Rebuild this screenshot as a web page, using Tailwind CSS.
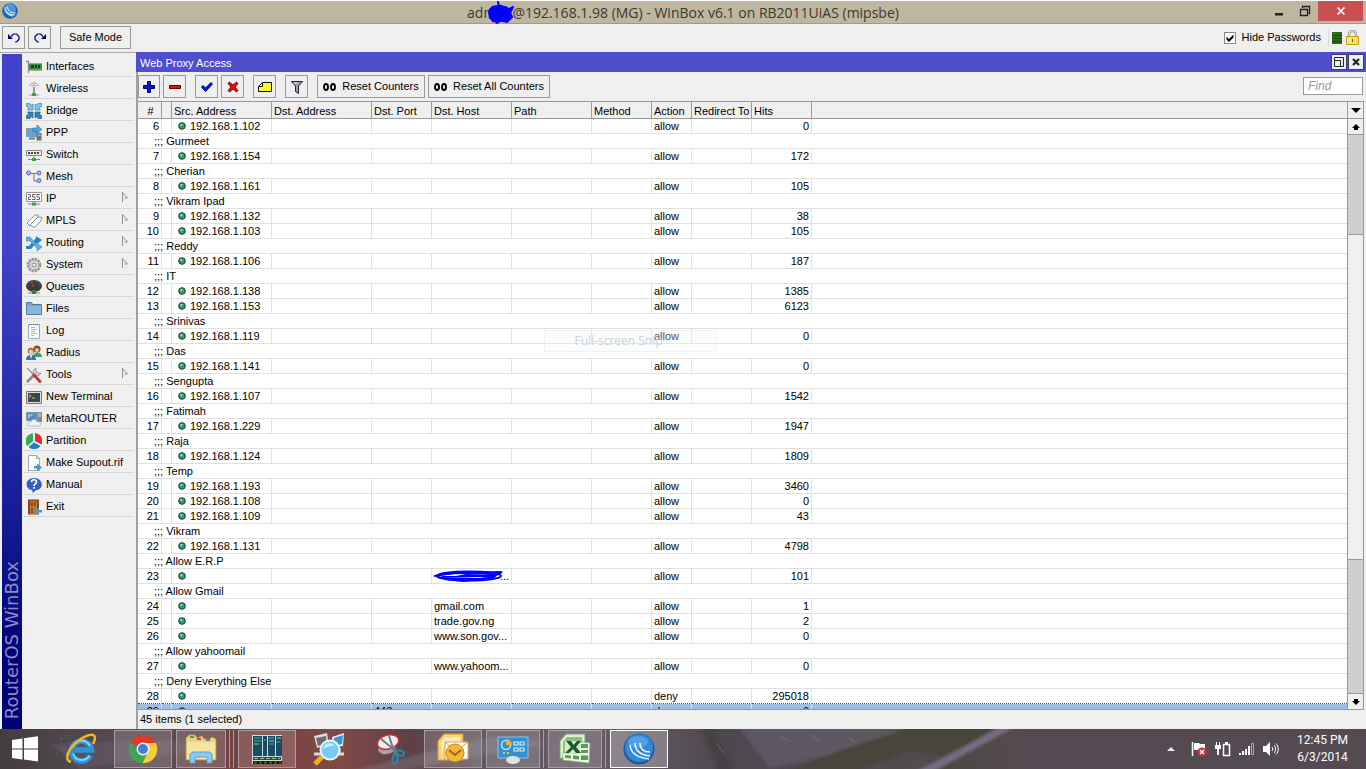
<!DOCTYPE html>
<html lang="en">
<head>
  <meta charset="UTF-8">
  <meta name="viewport" content="width=device-width, initial-scale=1.0">
  <title>WinBox - Web Proxy Access</title>
  <script src="https://cdn.jsdelivr.net/npm/@tailwindcss/browser@4"></script>
</head>
<body class="h-screen flex flex-col overflow-hidden bg-[#efefef] text-black text-[11px] font-['Liberation_Sans',Arial,sans-serif]">

  <!-- title bar -->
  <header class="h-6 shrink-0 grid grid-cols-[1fr_auto_1fr] bg-[#bfb6a0] border-t border-t-white border-b border-b-[#a29a86]">
    <div class="pl-0.5 pt-0.5">
      <svg class="w-4 h-4" viewBox="0 0 16 16">
        <circle cx="8" cy="8" r="7.8" fill="#1c62b4"/>
        <circle cx="8" cy="6.500" r="6" fill="#4b93dc"/>
        <path d="M3 4c0 5 4 8 10 8M5.500 3.500c0 4 3 6.500 8 6.500M4 8c1 3 4 5 7 5" fill="none" stroke="#e8f4ff" stroke-width="1"/>
      </svg>
    </div>
    <h1 class="relative text-sm leading-6 whitespace-nowrap text-[#3c382f] font-['Open_Sans',sans-serif]">
      adm<span class="inline-block w-4"></span>@192.168.1.98 (MG) - WinBox v6.1 on RB2011UiAS (mipsbe)
      <svg class="absolute left-5 top-0 w-7 h-6" viewBox="0 0 28 24" fill="none" stroke="#0000fe" stroke-linecap="round" stroke-linejoin="round">
        <path d="M3 9 6 6l7-1 7 2 3 5-1 5-5 3-6-1-5 1-2-5z" fill="#0000fe" stroke-width="2.500"/>
        <path d="M12 5 11 1M20 9l6-3-3 6 2 4-4 4M2 11l1 6 5 3M8 20l2 2 3-2M17 20l3 1" stroke-width="2"/>
      </svg>
    </h1>
    <div class="flex justify-end pr-[3px]">
      <button class="w-[26px] grid place-items-center" aria-label="Minimize"><svg class="w-2.5 h-5" viewBox="0 0 10 20"><path d="M1 10h8v2.500H1z" fill="#222"/></svg></button>
      <button class="w-[26px] grid place-items-center" aria-label="Restore"><svg class="w-3 h-5" viewBox="0 0 12 20" fill="none" stroke="#222"><path d="M1.500 6.500h7v6h-7zM1 6.500h8M3.500 5V3.500h7v7H9.500" stroke-width="1.300"/></svg></button>
      <button class="w-[45px] h-5 grid place-items-center bg-[#c94f50]" aria-label="Close"><svg class="w-2.5 h-2.5" viewBox="0 0 10 10"><path d="M1.500 1.500l7 7m0-7l-7 7" stroke="#fff" stroke-width="1.600"/></svg></button>
    </div>
  </header>

  <!-- session toolbar -->
  <div class="h-7 shrink-0 flex items-start pt-0.5 pl-0.5">
    <button class="w-[23px] h-[23px] grid place-items-center border border-[#999]" aria-label="Undo">
      <svg class="w-3 h-3" viewBox="0 0 12 12" fill="none" stroke="#000080" stroke-width="1.200"><path d="M3 4.500 5.500 2h3L11 4.500v3L8.500 10H7"/><path d="M0 2v5h5z" fill="#000080" stroke="none"/></svg>
    </button>
    <button class="ml-[3px] w-[23px] h-[23px] grid place-items-center border border-[#999]" aria-label="Redo">
      <svg class="w-3 h-3" viewBox="0 0 12 12" fill="none" stroke="#000080" stroke-width="1.200"><path d="M9 4.500 6.500 2h-3L1 4.500v3L3.500 10H5"/><path d="M12 2v5H7z" fill="#000080" stroke="none"/></svg>
    </button>
    <button class="ml-[9px] w-[71px] h-[23px] border border-[#999]">Safe Mode</button>
    <div class="ml-auto h-[23px] flex items-center pr-[7px]">
      <label class="flex items-center gap-1.5">
        <span class="relative w-3 h-3">
          <input type="checkbox" checked class="peer appearance-none block w-3 h-3 bg-white border border-[#888]">
          <svg class="absolute inset-0 hidden peer-checked:block w-3 h-3 pointer-events-none" viewBox="0 0 12 12"><path d="M2.500 4.500l2.500 2.500 4.500-4.500v3L5 10 2.500 7.500z" fill="#000"/></svg>
        </span>
        Hide Passwords
      </label>
      <span class="ml-[7px] w-px h-4 bg-[#dadada]"></span>
      <svg class="ml-[3px] w-2.5 h-3" viewBox="0 0 10 12"><path d="M0 0h10v12H0z" fill="#2c6a16"/><path d="M0 3.500h10M0 6.500h10M0 9.500h10" stroke="#1c4d0c"/></svg>
      <svg class="ml-1 w-[13px] h-[15px]" viewBox="0 0 13 15"><path d="M3 8V4.500a3.500 3.500 0 0 1 7 0V8" fill="none" stroke="#8f8f8f" stroke-width="2.400"/><path d="M3 8V4.500a3.500 3.500 0 0 1 7 0V8" fill="none" stroke="#eee"/><path d="M.5 6.500h12v8H.5z" fill="#f5dc5c" stroke="#c79d1c"/><path d="M2 8v5M4 8v5M9.500 8v5" stroke="#fff3a8"/><path d="M6.500 9v3" stroke="#7d6410"/></svg>
    </div>
  </div>

  <div class="flex-1 min-h-0 flex">
    <!-- side menu -->
    <aside class="w-[136px] shrink-0 flex border-t border-[#aaa] pl-0.5 pt-px">
      <div class="w-5 flex items-end justify-center pb-2.5 bg-gradient-to-b from-[#4040c8] from-30% to-[#000078] to-90%">
        <span class="[writing-mode:vertical-rl] rotate-180 leading-5 text-lg/5 whitespace-nowrap text-[#8c8cc0] font-['DejaVu_Sans',sans-serif]">RouterOS WinBox</span>
      </div>
      <nav class="flex-1 pt-px pl-0.5 pr-0.5 [&>button]:w-full [&>button]:h-[22px] [&>button]:flex [&>button]:items-center [&>button]:gap-1 [&>button]:pl-0.5 [&>button]:pt-0.5 [&>button]:border-b [&>button]:border-[#d6d6d6] [&>button]:whitespace-nowrap [&>button>svg]:w-4 [&>button>svg]:h-4 [&>button>svg]:shrink-0">
        <button><svg viewBox="0 0 16 16"><path d="M0 2.500h2.500V14" fill="none" stroke="#888" stroke-width="1.300"/><path d="M3 4h13v7.500H3z" fill="#3c8c46"/><path d="M3 4h13v1H3z" fill="#7fc07f"/><path d="M5 6h3v3H5zM9 6h2v3H9zM12 6h2v3h-2z" fill="#153d1b"/><path d="M4 11h11" stroke="#b8c665" stroke-dasharray="1 1"/></svg>Interfaces</button>
        <button><svg viewBox="0 0 16 16" fill="none"><path d="M3.500 5C5 1 11 1 12.500 5M5.500 6C6.500 3.500 9.500 3.500 10.500 6" stroke="#999"/><path d="M8 6v7" stroke="#777" stroke-width="1.500"/><path d="M3 14h10" stroke="#999"/><path d="M6 12h4v3H6z" fill="#3ca34c"/></svg>Wireless</button>
        <button><svg viewBox="0 0 16 16" stroke-width=".7"><g fill="#7cc4ee" stroke="#3a86b5"><path d="M.5.5H4l1 2 2-1.500V7H1.500L3 5 .5 3.500z"/><path d="M15.500.5H12l-1 2L9 1v6h5.500L13 5l2.500-1.500z"/></g><g fill="#3583b3" stroke="#1f5f8a"><path d="M.5 15.500H4l1-2L7 15V9H1.500L3 11 .5 12.500z"/><path d="M15.500 15.500H12l-1-2L9 15V9h5.500L13 11l2.500 1.500z"/></g></svg>Bridge</button>
        <button><svg viewBox="0 0 16 16"><path d="M.5 3.500h10v8H.5z" fill="#5ba7df" stroke="#8a99a5"/><path d="M3 13.500h6" stroke="#777" stroke-width="2"/><path d="M10.500 8h5v7.500h-5z" fill="#66757d"/><path d="M11.500 10h3" stroke="#ccd"/><path d="M7 7V3h4V0l5 4.500-5 4V6H9v1z" fill="#4da5e6" stroke="#246eac" stroke-width=".6"/></svg>PPP</button>
        <button><svg viewBox="0 0 16 16"><path d="M.5 3.500h15v5H.5z" fill="#eee" stroke="#888"/><path d="M2 6h12" stroke="#444" stroke-width="2" stroke-dasharray="2 1"/><path d="M8 9v4M2 12.500h12" stroke="#888"/><path d="M6 11h4v3H6z" fill="#3c9a49"/></svg>Switch</button>
        <button><svg viewBox="0 0 16 16"><path d="M5 4.500h6M8 5v7h3" fill="none" stroke="#777"/><g fill="#a9b5f4" stroke="#5968c4"><circle cx="2.500" cy="4" r="2"/><circle cx="13" cy="4" r="2"/><circle cx="13" cy="11.500" r="2"/></g></svg>Mesh</button>
        <button><svg viewBox="0 0 16 16"><path d="M.5 1.500h15v9H.5z" fill="#fff" stroke="#999"/><path d="M2 3.500h2.500V6H2.500v2.500H5M9.500 3.500h-3V6h2.500v2.500h-3M14 3.500h-3V6h2.500v2.500h-3" fill="none" stroke="#555" stroke-width=".9"/><path d="M2 13h12" stroke="#888"/><path d="M6 11.500h4v3H6z" fill="#3c9a49"/></svg>IP<svg class="ml-auto mr-[3px]" viewBox="0 0 16 16"><path d="M7.500 1v10M7.500 1.500l5 5.500H9.500" fill="none" stroke="#888" stroke-width=".9"/></svg></button>
        <button><svg viewBox="0 0 16 16" fill="#fff" stroke="#7f9490"><path d="M1 10 9 2l3 0v3l-8 8z"/><path d="M4 12l8-8 3.500.5-.5 3.500-7 6.500z"/></svg>MPLS<svg class="ml-auto mr-[3px]" viewBox="0 0 16 16"><path d="M7.500 1v10M7.500 1.500l5 5.500H9.500" fill="none" stroke="#888" stroke-width=".9"/></svg></button>
        <button><svg viewBox="0 0 16 16"><path d="M0 11h3l7-8V1l6 4-5 4V7l-6 7H0z" fill="#2f82c4"/><path d="M0 2h4l6 7V7l6 5-5 4v-3L4 6H0z" fill="#59b1ea" stroke="#2e78b3" stroke-width=".5"/></svg>Routing<svg class="ml-auto mr-[3px]" viewBox="0 0 16 16"><path d="M7.500 1v10M7.500 1.500l5 5.500H9.500" fill="none" stroke="#888" stroke-width=".9"/></svg></button>
        <button><svg viewBox="0 0 16 16" fill="none"><circle cx="8" cy="8" r="6.300" stroke="#909090" stroke-width="2" stroke-dasharray="2.300 1"/><circle cx="8" cy="8" r="5" fill="#d8d8d8" stroke="#999"/><circle cx="8" cy="8" r="2" fill="#efefef" stroke="#888"/></svg>System<svg class="ml-auto mr-[3px]" viewBox="0 0 16 16"><path d="M7.500 1v10M7.500 1.500l5 5.500H9.500" fill="none" stroke="#888" stroke-width=".9"/></svg></button>
        <button><svg viewBox="0 0 16 16"><ellipse cx="8" cy="7" rx="8" ry="6" fill="#3f3a3a"/><path d="M2 7a6 5 0 0 1 12 0" fill="none" stroke="#8b8585" stroke-dasharray="1 2"/><path d="M8 8 5 3" stroke="#d44"/><path d="M2 14h12" stroke="#888"/><path d="M6 11h4v4H6z" fill="#3c7a45"/></svg>Queues</button>
        <button><svg viewBox="0 0 16 16"><path d="M.5 13.500v-12h5l1 2h9v10z" fill="#74a7c7" stroke="#4d7e9d"/><path d="M1 5h14v8H1z" fill="#8ab8d4"/></svg>Files</button>
        <button><svg viewBox="0 0 16 16"><path d="M2.500 1.500h11v14h-11z" fill="#f6faf9" stroke="#96aaa9"/><path d="M3 1.500h10" stroke="#667" stroke-dasharray="1 1"/><path d="M5 4.500h4M5 6.500h6M5 8.500h4M5 10.500h6M5 12.500h3" stroke="#a3bbb3"/></svg>Log</button>
        <button><svg viewBox="0 0 16 16"><circle cx="11" cy="4" r="3.500" fill="#8a4a24"/><circle cx="11" cy="5" r="2" fill="#f0c39b"/><path d="M7 12c0-6 9-6 9 0z" fill="#3ea06b"/><circle cx="5" cy="6" r="3.300" fill="#ab6a26"/><circle cx="5" cy="7" r="2.200" fill="#f3cba3"/><path d="M0 15c0-7 10-7 10 0z" fill="#3b72b8"/><path d="M4 10h2l-1 4z" fill="#fff"/></svg>Radius</button>
        <button><svg viewBox="0 0 16 16"><path d="M1 15 11 5" stroke="#888" stroke-width="2.500"/><path d="M10 1a4 4 0 1 0 5 5l-3 0-2-2z" fill="#c8c8c8" stroke="#888" stroke-width=".7"/><path d="M1 1l7 7" stroke="#999" stroke-width="1.500"/><path d="M8 8l6 6.500" stroke="#cc3434" stroke-width="3" stroke-linecap="round"/></svg>Tools<svg class="ml-auto mr-[3px]" viewBox="0 0 16 16"><path d="M7.500 1v10M7.500 1.500l5 5.500H9.500" fill="none" stroke="#888" stroke-width=".9"/></svg></button>
        <button><svg viewBox="0 0 16 16"><path d="M.5 2.500h15v12H.5z" fill="#ddd" stroke="#777"/><path d="M2 4h12v9H2z" fill="#414449"/><path d="M3 5.500 5 7 3 8.500M6 9h3" fill="none" stroke="#ddd" stroke-width=".8"/></svg>New Terminal</button>
        <button><svg viewBox="0 0 16 16"><path d="M.5 1.500h10v8H.5z" fill="#438ccc" stroke="#8796a4"/><path d="M2 3h6L2 8z" fill="#86bbe4"/><path d="M11 1h5v10h-5z" fill="#7c8b93"/><path d="M12 3h3M12 5h3" stroke="#ddd"/><path d="M2 15c-2-3 1-5 3-4 1-4 6-3 6 0 3-1 5 2 3 4z" fill="#eef3f7" stroke="#9aabb9" stroke-width=".7"/></svg>MetaROUTER</button>
        <button><svg viewBox="0 0 16 16"><path d="M9 8V0a8 8 0 0 1 6.500 11.500z" fill="#d83333"/><path d="M7 8V0.500A7.500 7.500 0 0 0 1.500 13z" fill="#36a957"/><path d="M8 9.500l6.500 3.500A8 8 0 0 1 2.500 14z" fill="#237fc2"/></svg>Partition</button>
        <button><svg viewBox="0 0 16 16"><path d="M2.500.5h8l3 3v12h-11z" fill="#fbfdfe" stroke="#98aab4"/><path d="M10.500.5v3h3" fill="none" stroke="#98aab4"/><path d="M8 11h3V8.500l5 4-5 3.500v-2.500H8z" fill="#4797cc"/></svg>Make Supout.rif</button>
        <button><svg viewBox="0 0 16 16"><path d="M8 1c10 0 10 12 2 12l-3 3-1-3C-2 12-1 1 8 1z" fill="#2f5fc4"/><path d="M5.500 5c0-3 5-3 5 0 0 2-2.500 1.800-2.500 4M8 10v1.800" fill="none" stroke="#fff" stroke-width="1.700"/></svg>Manual</button>
        <button><svg viewBox="0 0 16 16"><path d="M2 .5h11v15H2z" fill="#85451d"/><path d="M4 2h7v13H4z" fill="#bd743b"/><path d="M5 3h2v4H5zM8 3h2v4H8zM5 9h2v5H5z" fill="#8f4f22"/><path d="M16 11h-3V8.500l-5 4 5 3.500v-2.500h3z" fill="#4797cc"/></svg>Exit</button>
      </nav>
    </aside>

    <!-- web proxy window -->
    <main class="flex-1 min-w-0 flex flex-col">
      <div class="h-5 shrink-0 flex items-center pl-1 pr-[3px] bg-[#4f4fcd] text-white">
        <h2 class="pt-0.5">Web Proxy Access</h2>
        <button class="ml-auto w-3.5 h-3.5 bg-[#efefef] outline outline-[#333]/60" aria-label="Restore window"><svg class="w-3.5 h-3.5" viewBox="0 0 14 14" fill="none" stroke="#222"><path d="M2.500 2.500h9v9h-9zM2 5.500h6.500V12"/></svg></button>
        <button class="ml-[3px] w-3.5 h-3.5 bg-[#efefef] outline outline-[#333]/60" aria-label="Close window"><svg class="w-3.5 h-3.5" viewBox="0 0 14 14"><path d="M4 4l6 6m0-6l-6 6" stroke="#222" stroke-width="2.200"/></svg></button>
      </div>

      <div class="flex-1 min-h-0 flex flex-col border-l-2 border-[#a0a0a0]">
        <div class="h-[29px] shrink-0 flex items-start pt-[3px] pr-[3px] [&>button]:h-[23px] [&>button]:border [&>button]:border-[#999] [&>button]:flex [&>button]:items-center [&>button]:justify-center">
          <button class="w-[22px]" aria-label="Add"><svg class="w-3 h-3" viewBox="0 0 12 12"><path d="M4.500.5h3v4h4v3h-4v4h-3v-4h-4v-3h4z" fill="#0016e0" stroke="#000060"/></svg></button>
          <button class="ml-[3px] w-[23px]" aria-label="Remove"><svg class="w-3 h-3" viewBox="0 0 12 12"><path d="M.5 4.500h11v3H.5z" fill="#e01010" stroke="#600"/></svg></button>
          <button class="ml-[9px] w-[23px]" aria-label="Enable"><svg class="w-3 h-3" viewBox="0 0 12 12"><path d="M.5 6 2 4.500l2.500 2.500 5.500-5.500L11.500 3l-7 7.500z" fill="#0016e0" stroke="#000080"/></svg></button>
          <button class="ml-[3px] w-[23px]" aria-label="Disable"><svg class="w-3 h-3" viewBox="0 0 12 12"><path d="M1 2.500 2.500 1 6 4l3.500-3L11 2.500 8 6l3 3.500L9.500 11 6 8l-3.500 3L1 9.500 4 6z" fill="#e01010" stroke="#700" stroke-width=".9"/></svg></button>
          <button class="ml-[9px] w-[23px]" aria-label="Comment"><svg class="w-3.5 h-3" viewBox="0 0 14 12"><path d="M4.500 1.500h9v9H.5v-5z" fill="#fdf733" stroke="#111"/><path d="M4.500 1.500v4h-4z" fill="#fff" stroke="#111" stroke-linejoin="round"/></svg></button>
          <button class="ml-[9px] w-[23px]" aria-label="Filter"><svg class="w-3 h-3.5" viewBox="0 0 12 14"><path d="M.5 1.500h11L7.500 6v7.500l-3-2V6z" fill="#93a3b4" stroke="#222"/><path d="M3 3h3" stroke="#dfe8ee"/></svg></button>
          <button class="ml-[9px] w-[108px] gap-1.5"><svg class="w-[13px] h-2.5" viewBox="0 0 13 10" fill="none" stroke="#000" stroke-width="1.900"><ellipse cx="3" cy="5" rx="2" ry="3"/><ellipse cx="10" cy="5" rx="2" ry="3"/></svg>Reset Counters</button>
          <button class="ml-[3px] w-[122px] gap-1.5"><svg class="w-[13px] h-2.5" viewBox="0 0 13 10" fill="none" stroke="#000" stroke-width="1.900"><ellipse cx="3" cy="5" rx="2" ry="3"/><ellipse cx="10" cy="5" rx="2" ry="3"/></svg>Reset All Counters</button>
          <input type="text" placeholder="Find" aria-label="Find" class="ml-auto mt-0.5 w-[60px] h-[18px] px-1 bg-white border border-[#999] italic text-xs placeholder:text-[#9a9a9a]">
        </div>

        <div class="relative flex-1 min-h-0 flex mr-[2px] border-y border-[#999]">
          <div class="flex-1 min-w-0 overflow-hidden bg-white">
            <table class="w-full table-fixed border-separate border-spacing-0 leading-[14px] whitespace-nowrap">
              <colgroup>
                <col class="w-6"><col class="w-2.5"><col class="w-[100px]"><col class="w-[100px]"><col class="w-[60px]"><col class="w-20"><col class="w-20"><col class="w-[60px]"><col class="w-10"><col class="w-[60px]"><col class="w-[60px]"><col>
              </colgroup>
              <thead>
                <tr class="bg-[#efefef] [&>th]:h-[17px] [&>th]:p-0 [&>th]:pl-0.5 [&>th]:pt-0.5 [&>th]:font-normal [&>th]:text-left [&>th]:border-b [&>th]:border-r [&>th]:border-[#999] [&>th:last-child]:border-r-0">
                  <th><span class="block text-center">#</span></th><th></th><th>Src. Address</th><th>Dst. Address</th><th>Dst. Port</th><th>Dst. Host</th><th>Path</th><th>Method</th><th>Action</th><th>Redirect To</th><th>Hits</th><th></th>
                </tr>
              </thead>
              <tbody id="rules" class="[&_td]:h-[15px] [&_td]:p-0 [&_td]:px-0.5 [&_td]:border-b [&_td]:border-[#e0e0e0]"></tbody>
            </table>
          </div>

          <!-- scrollbar -->
          <div class="w-[17px] shrink-0 flex flex-col border-x border-[#999] bg-[#cfcfcf]">
            <button class="h-[17px] shrink-0 grid place-items-center bg-[#efefef] border-b border-[#999]" aria-label="Columns"><svg class="w-2.5 h-[5px]" viewBox="0 0 10 5"><path d="M0 0h10L5 5z"/></svg></button>
            <button class="h-4 shrink-0 grid place-items-center bg-[#efefef] border-b border-[#999]" aria-label="Scroll up"><svg class="w-2 h-1.5" viewBox="0 0 8 6"><path d="M4 0l4 4H6v2H2V4H0z"/></svg></button>
            <div class="grow-[100]"></div>
            <div class="grow-[325] bg-[#efefef] border-y border-[#999]"></div>
            <div class="grow-[134]"></div>
            <button class="h-4 shrink-0 grid place-items-center bg-[#efefef] border-t border-[#999]" aria-label="Scroll down"><svg class="w-2 h-1.5" viewBox="0 0 8 6"><path d="M4 6l4-4H6V0H2v2H0z"/></svg></button>
          </div>

          <!-- fading tooltip -->
          <div class="absolute left-[406px] top-[228px] w-[173px] h-[22px] bg-[#eef4f9]/30 border border-[#e4ecf2]/60 text-center text-xs leading-5 text-[#ccd4da] pr-6 font-['Open_Sans',sans-serif]">Full-screen Snip</div>
        </div>

        <div class="h-[19px] shrink-0 pl-0.5 leading-[19px]">45 items (1 selected)</div>
      </div>
    </main>
  </div>

  <!-- taskbar -->
  <footer class="relative isolate h-10 shrink-0 flex items-center pl-[52px] bg-[#544b52] text-white overflow-hidden">
    <svg class="absolute inset-0 -z-10 w-full h-full" viewBox="0 0 1366 40" preserveAspectRatio="none">
      <defs>
        <linearGradient id="wall"><stop offset="0" stop-color="#443d3d"/><stop offset=".06" stop-color="#50484f"/><stop offset=".12" stop-color="#5b4a50"/><stop offset=".18" stop-color="#75403f"/><stop offset=".25" stop-color="#804a47"/><stop offset=".3" stop-color="#5c4145"/><stop offset=".35" stop-color="#625861"/><stop offset=".45" stop-color="#665c66"/><stop offset=".53" stop-color="#4f4750"/><stop offset=".6" stop-color="#544b55"/><stop offset=".68" stop-color="#4b463e"/><stop offset=".75" stop-color="#544b52"/></linearGradient>
        <filter id="soft"><feGaussianBlur stdDeviation="1.500"/></filter>
      </defs>
      <path d="M0 0h1366v40H0z" fill="url(#wall)"/>
      <g filter="url(#soft)">
        <path d="M50 15l120-5 30 12-120 18z" fill="#716875" opacity=".35"/>
        <path d="M350 42 490 8l60 6-150 28z" fill="#857b8a" opacity=".4"/>
        <path d="M700-3h12l22 46h-16z" fill="#413c3b" opacity=".6"/>
        <path d="M738-3h170l-48 22-90 20z" fill="#6a6071" opacity=".55"/>
        <path d="M780 44 850 18 920-4h90L905 44z" fill="#49453a"/>
        <path d="M850 44l60-22 30 5-25 17z" fill="#564e58" opacity=".7"/>
        <path d="M915 43 960 20 1001-3h16l-48 26-36 20z" fill="#776c83"/>
      </g>
      <path d="M780 8l10 4M812 6l8 6M716 14l8 10M850 9l6 5M60 10h3M62 20h4M70 30h4M85 12h3M56 25h2" stroke="#8a8092" opacity=".6"/>
    </svg>
    <button class="absolute left-0 w-[50px] h-10 grid place-items-center" aria-label="Start"><svg class="w-[26px] h-[26px]" viewBox="0 0 26 26" fill="#fff"><path d="M0 4l10.500-1.500v10H0zM12 2.300 26 .3v12.200H12zM0 13.500h10.500v10L0 22zM12 13.500h14v12l-14-2z"/></svg></button>

    <div class="flex [&>div]:w-[62px] [&>div]:flex [&>div]:gap-[3px] [&_button]:h-[38px] [&_button]:grid [&_button]:place-items-center [&_i]:w-px [&_i]:h-[38px] [&_i]:bg-[#a79da5]">
      <div><button class="w-[58px]" aria-label="Internet Explorer"><svg class="w-8 h-8" viewBox="0 0 32 32" fill="none"><path d="M25.500 22.500a10 10 0 1 1 1-5.500H10" stroke="#2b95dc" stroke-width="5.500"/><path d="M24.500 22.500a9 9 0 0 1-16.500-2M8 14c2-7 13-9 17-1" stroke="#7fd4f8" stroke-width="2"/><path d="M6 29C-2 27 4 15 12 9 20 2 30-1 30 5c0 2-1 4-2 6" stroke="#f2b91d" stroke-width="2.500"/></svg></button></div>
      <div><button class="w-[58px] bg-white/15 border border-[#a79da5]" aria-label="Chrome"><svg class="w-[30px] h-[30px]" viewBox="0 0 30 30"><path d="M15 15 2.500 8A14.300 14.300 0 0 1 28 9H15z" fill="#db3b2c"/><path d="M15 15 15 9h13a14.300 14.300 0 0 1-13 20.300z" fill="#f8cd37"/><path d="M2.500 8 10 18l9 2-4.500 9.300A14.300 14.300 0 0 1 2.500 8z" fill="#3ba653"/><circle cx="15" cy="15" r="6.500" fill="#f2f2f2"/><circle cx="15" cy="15" r="5" fill="#3f7fd6"/></svg></button></div>
      <div><button class="w-[50px] bg-white/15 border border-[#a79da5]" aria-label="File Explorer"><svg class="w-8 h-8" viewBox="0 0 32 32"><path d="M1 27V5l3-3h6l2 3 5-2 2 3h6l2-2 4 2v21z" fill="#e9d17d" stroke="#b89a4a" stroke-width=".7"/><path d="M2 9h28v17H2z" fill="#f5e4a0"/><path d="M5 4h4" stroke="#4c9c50" stroke-width="2"/><path d="M12 6h4" stroke="#c44b36" stroke-width="2"/><path d="M21 7h4" stroke="#3d83b5" stroke-width="2"/><path d="M5 30v-9l3-2h16l3 2v9h-5v-6H10v6z" fill="#8dcaf1" stroke="#5a9fd0"/></svg></button><i></i><i></i></div>
      <div><button class="w-[58px] bg-white/15 border border-[#a79da5]" aria-label="Server Manager"><svg class="w-[30px] h-[34px]" viewBox="0 0 30 34"><path d="M0 3h30v29H0z" fill="#ced9d8"/><path d="M1 4h9v20H1zM11 4h4v20h-4zM16 4h7v20h-7zM24 4h6v20h-6zM1 25h28v3H1z" fill="#174d64"/><path d="M2 6h7M16 6h6M24 10h4" stroke="#3fa6d8"/><path d="M2 9h7M12 8h2M17 12h5" stroke="#48be59"/><path d="M2 12h5M17 9h5M25 6h4" stroke="#d9bd41"/><path d="M2 26.500h26" stroke="#90c59b" stroke-dasharray="4 2"/><path d="M1 30.500h29" stroke="#111" stroke-width="3"/><path d="M2 30.500h27" stroke="#3d6a22" stroke-width="2" stroke-dasharray="3 2"/></svg></button></div>
      <div><button class="w-[58px]" aria-label="Network Scanner"><svg class="w-[34px] h-[34px]" viewBox="0 0 34 34"><path d="M2 4l13-3 2 12-12 3z" fill="#ddd"/><path d="M4 6l10-2 1 8-9 2z" fill="#686c70"/><path d="M20 5l12-4-1 13-10 1z" fill="#e5eef5"/><path d="M22 6l9-3-1 9-8 2z" fill="#3496d5"/><path d="M2 22h30M27 16v6" stroke="#d8d8d8" stroke-width="3"/><path d="M3 32l9-9" stroke="#e2b425" stroke-width="5"/><circle cx="18" cy="18" r="9.500" fill="#7bcaf4" stroke="#e2f4fc" stroke-width="2"/><path d="M11 17c1-6 8-8 12-3-4-1-8 1-12 3z" fill="#d0effd"/></svg></button></div>
      <div><button class="w-[58px]" aria-label="Snipping Tool"><svg class="w-8 h-8" viewBox="0 0 32 32" fill="none"><ellipse cx="12" cy="15" rx="9" ry="6" transform="rotate(-15 12 15)" fill="#a9a0a2"/><ellipse cx="13" cy="9" rx="11" ry="7" transform="rotate(-15 13 9)" fill="#eee" stroke="#c92b3a" stroke-width="1.500"/><path d="M6 6l16 13M14 3l6 18" stroke="#778" stroke-width="2"/><ellipse cx="25" cy="20" rx="4" ry="2.500" transform="rotate(20 25 20)" stroke="#258bb2" stroke-width="2"/><ellipse cx="20" cy="26" rx="2.500" ry="4.500" transform="rotate(10 20 26)" stroke="#258bb2" stroke-width="2"/></svg></button></div>
      <div><button class="w-[58px] bg-white/15 border border-[#a79da5]" aria-label="Outlook"><svg class="w-8 h-8" viewBox="0 0 32 32"><path d="M1 27V8l6-7h19v26z" fill="#f6d27a" stroke="#d9982a"/><path d="M4 24V9l4-5h15v5H9z" fill="#fbe9b9"/><path d="M8 9h23v17H8z" fill="#fff" stroke="#dca64b"/><path d="M8 9l11 9L31 9" fill="none" stroke="#d59b3a"/><circle cx="18" cy="20" r="9" fill="#f2b936" stroke="#ca861a"/><path d="M12 17l6 5 6-5" fill="none" stroke="#9a651a" stroke-width="2"/></svg></button></div>
      <div><button class="w-[54px] bg-white/15 border border-[#a79da5]" aria-label="Control Panel"><svg class="w-8 h-8" viewBox="0 0 32 32"><path d="M1 4h30v21H1z" fill="#318fd2" stroke="#8cc6eb"/><circle cx="9" cy="12" r="4.500" fill="none" stroke="#bde0f5" stroke-width="1.500"/><path d="M9 12V6a6 6 0 0 1 6 6z" fill="#f1b33c"/><path d="M17 9h4v3h-4zM23 9h4v3h-4zM17 15h4v3h-4zM23 15h4v3h-4z" fill="none" stroke="#d8effa" stroke-width="1.200"/><path d="M6 20h2M10 20h2" stroke="#f1c33c" stroke-width="2"/><ellipse cx="16" cy="27" rx="7" ry="4" fill="#dde1e4"/></svg></button><i></i></div>
      <div><button class="w-[54px] bg-white/15 border border-[#a79da5]" aria-label="Excel"><svg class="w-8 h-8" viewBox="0 0 32 32"><path d="M1 26V8l6-7h19v8" fill="#dcefd3" stroke="#72ab67"/><path d="M4 24V9l4-5h15v6H9v14z" fill="#8cc080"/><path d="M20 9l11 1-1 20-26-3v-7h16z" fill="#eff7ea" stroke="#8aba7b" stroke-width=".7"/><path d="M6 8h14v12H6z" fill="#d6ebcc"/><path d="M22 11h7v4h-7zM22 17h7v3h-7zM6 22l6 .5v3L6 25zM14 22.500l6 .5v3.500l-6-.5zM22 22.500h7v4.500h-7z" fill="#5d9d50"/><path d="M7 8h5l2.500 4L18 8h4l-5 6 5 6h-5l-3-4-4 4H6l6-6z" fill="#1a5c28"/></svg></button><i></i></div>
      <div><button class="w-[58px] bg-white/25 border border-white" aria-label="WinBox"><svg class="w-8 h-8" viewBox="0 0 32 32"><circle cx="16" cy="16" r="15.500" fill="#185ca6"/><circle cx="16" cy="15" r="14" fill="#3488d8"/><ellipse cx="15" cy="9" rx="10" ry="6" fill="#529fe5"/><path d="M7 12c1 9 9 13 19 14M12 10c0 8 6 12 15 13M17 10c0 6 4 9 10 9" fill="none" stroke="#e9f5ff" stroke-width="1.600"/></svg></button></div>
    </div>

    <div class="ml-auto flex items-center gap-2 pr-[18px]">
      <svg class="w-2 h-1 mr-2" viewBox="0 0 8 4"><path d="M0 4l4-4 4 4z" fill="#eee"/></svg>
      <svg class="w-4 h-4" viewBox="0 0 16 16"><path d="M1.500 1v14" stroke="#fff" stroke-width="1.500"/><path d="M3 2h5l1 1h5v7H9L8 9H3z" fill="#fff"/><circle cx="11" cy="11" r="4.500" fill="#cc3030"/><path d="M9 9l4 4m0-4-4 4" stroke="#fff" stroke-width="1.300"/></svg>
      <svg class="w-4 h-4" viewBox="0 0 16 16" fill="none" stroke="#fff"><path d="M1.500 1v3M4.500 1v3"/><path d="M0 4h6v4H4v6H2V8H0z" fill="#fff" stroke="none"/><path d="M8.500 3.500h6v11h-6z" stroke-width="1.500"/><path d="M10 2h3" stroke-width="2"/></svg>
      <svg class="w-4 h-4" viewBox="0 0 16 16" fill="#fff"><path d="M0 12h2v2H0zM3 10h2v4H3zM6 8h2v6H6zM9 5h2v9H9z"/><path d="M12.500 2.500h2v11h-2z" fill="none" stroke="#aaa"/></svg>
      <svg class="w-4 h-4" viewBox="0 0 16 16" fill="none" stroke="#fff"><path d="M0 5h3l4-4v14l-4-4H0z" fill="#fff" stroke="none"/><path d="M9 6c1 1 1 3 0 4M11 4c2 2 2 6 0 8M13 2.500c3 3 3 8 0 11"/></svg>
      <div class="ml-2.5 text-center text-xs leading-[17px] font-[Roboto,sans-serif]">
        <p>12:45 PM</p>
        <p>6/3/2014</p>
      </div>
    </div>
  </footer>

  <script>
    // a string is a comment line, an array is [number, src, port, host, action, hits]
    const rules = [
      [6, '192.168.1.102', '', '', 'allow', 0],
      'Gurmeet',
      [7, '192.168.1.154', '', '', 'allow', 172],
      'Cherian',
      [8, '192.168.1.161', '', '', 'allow', 105],
      'Vikram Ipad',
      [9, '192.168.1.132', '', '', 'allow', 38],
      [10, '192.168.1.103', '', '', 'allow', 105],
      'Reddy',
      [11, '192.168.1.106', '', '', 'allow', 187],
      'IT',
      [12, '192.168.1.138', '', '', 'allow', 1385],
      [13, '192.168.1.153', '', '', 'allow', 6123],
      'Srinivas',
      [14, '192.168.1.119', '', '', 'allow', 0],
      'Das',
      [15, '192.168.1.141', '', '', 'allow', 0],
      'Sengupta',
      [16, '192.168.1.107', '', '', 'allow', 1542],
      'Fatimah',
      [17, '192.168.1.229', '', '', 'allow', 1947],
      'Raja',
      [18, '192.168.1.124', '', '', 'allow', 1809],
      'Temp',
      [19, '192.168.1.193', '', '', 'allow', 3460],
      [20, '192.168.1.108', '', '', 'allow', 0],
      [21, '192.168.1.109', '', '', 'allow', 43],
      'Vikram',
      [22, '192.168.1.131', '', '', 'allow', 4798],
      'Allow E.R.P',
      [23, '', '', 'scribble', 'allow', 101],
      'Allow Gmail',
      [24, '', '', 'gmail.com', 'allow', 1],
      [25, '', '', 'trade.gov.ng', 'allow', 2],
      [26, '', '', 'www.son.gov...', 'allow', 0],
      'Allow yahoomail',
      [27, '', '', 'www.yahoom...', 'allow', 0],
      'Deny Everything Else',
      [28, '', '', '', 'deny', 295018],
      [29, '', '443', '', 'deny', 0]
    ];

    const dot = '<svg class="w-2 h-2 ml-1 mr-1 shrink-0" viewBox="0 0 8 8"><circle cx="4" cy="4" r="3.300" fill="#35a06f" stroke="#14382a"/><circle cx="3.300" cy="3" r="1" fill="#a9ecc9"/></svg>';
    const scribble = '<span class="relative block pl-[66px]">...<svg class="absolute left-0 top-0 w-[70px] h-3.5" viewBox="0 0 70 14" fill="none" stroke="#0000fe" stroke-width="2"><ellipse cx="35" cy="7" rx="32" ry="4.500"/><ellipse cx="32" cy="7" rx="29" ry="3"/><path d="M0 7 20 4l48-1-12 6-26 3-18-2 20-4 30 1M8 8l40-1"/></svg></span>';

    function ruleRow(rule) {
      if (typeof rule === 'string') {
        return '<tr><td colspan="12"><span class="pl-3.5">;;; ' + rule + '</span></td></tr>';
      }
      const [num, src, port, host, action, hits] = rule;
      const line = num === 29
        ? 'bg-[#a0bde3] [&>td:not(:last-child)]:border-r'
        : '[&>td:not(:last-child)]:border-r';
      const over = num === 28 ? ' [&>td]:border-b-[#555]! [&>td]:[border-bottom-style:dotted]' : '';
      return '<tr class="' + line + over + '">' +
        '<td class="text-right">' + num + '</td><td></td>' +
        '<td><span class="flex items-center">' + dot + src + '</span></td><td></td>' +
        '<td>' + port + '</td>' +
        '<td>' + (host === 'scribble' ? scribble : host) + '</td><td></td><td></td>' +
        '<td>' + action + '</td><td></td>' +
        '<td class="text-right">' + hits + '</td><td></td></tr>';
    }

    document.getElementById('rules').innerHTML = rules.map(ruleRow).join('');
  </script>
</body>
</html>
